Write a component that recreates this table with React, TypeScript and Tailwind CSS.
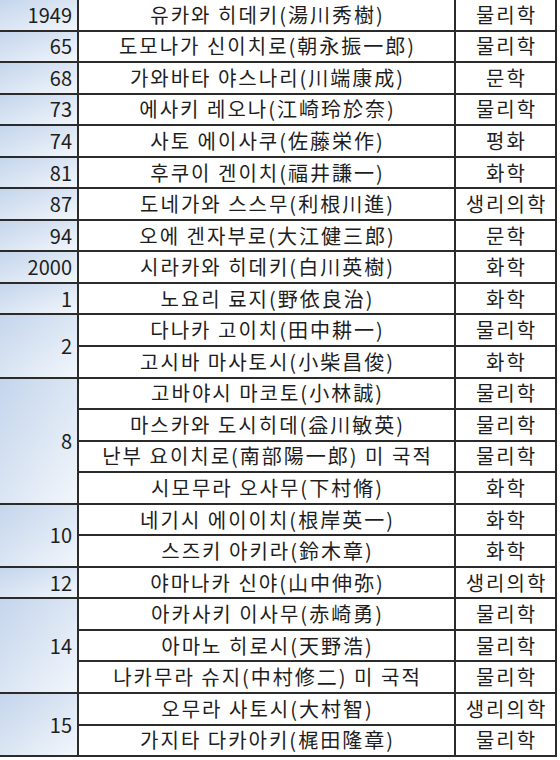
type Row = { name: string; field: string };
type Group = { year: string; rows: Row[] };

const groups: Group[] = [
  { year: "1949", rows: [{ name: "유카와 히데키(湯川秀樹)", field: "물리학" }] },
  { year: "65", rows: [{ name: "도모나가 신이치로(朝永振一郎)", field: "물리학" }] },
  { year: "68", rows: [{ name: "가와바타 야스나리(川端康成)", field: "문학" }] },
  { year: "73", rows: [{ name: "에사키 레오나(江崎玲於奈)", field: "물리학" }] },
  { year: "74", rows: [{ name: "사토 에이사쿠(佐藤栄作)", field: "평화" }] },
  { year: "81", rows: [{ name: "후쿠이 겐이치(福井謙一)", field: "화학" }] },
  { year: "87", rows: [{ name: "도네가와 스스무(利根川進)", field: "생리의학" }] },
  { year: "94", rows: [{ name: "오에 겐자부로(大江健三郎)", field: "문학" }] },
  { year: "2000", rows: [{ name: "시라카와 히데키(白川英樹)", field: "화학" }] },
  { year: "1", rows: [{ name: "노요리 료지(野依良治)", field: "화학" }] },
  {
    year: "2",
    rows: [
      { name: "다나카 고이치(田中耕一)", field: "물리학" },
      { name: "고시바 마사토시(小柴昌俊)", field: "화학" },
    ],
  },
  {
    year: "8",
    rows: [
      { name: "고바야시 마코토(小林誠)", field: "물리학" },
      { name: "마스카와 도시히데(益川敏英)", field: "물리학" },
      { name: "난부 요이치로(南部陽一郎) 미 국적", field: "물리학" },
      { name: "시모무라 오사무(下村脩)", field: "화학" },
    ],
  },
  {
    year: "10",
    rows: [
      { name: "네기시 에이이치(根岸英一)", field: "화학" },
      { name: "스즈키 아키라(鈴木章)", field: "화학" },
    ],
  },
  { year: "12", rows: [{ name: "야마나카 신야(山中伸弥)", field: "생리의학" }] },
  {
    year: "14",
    rows: [
      { name: "아카사키 이사무(赤崎勇)", field: "물리학" },
      { name: "아마노 히로시(天野浩)", field: "물리학" },
      { name: "나카무라 슈지(中村修二) 미 국적", field: "물리학" },
    ],
  },
  {
    year: "15",
    rows: [
      { name: "오무라 사토시(大村智)", field: "생리의학" },
      { name: "가지타 다카아키(梶田隆章)", field: "물리학" },
    ],
  },
];

const App = () => {
  return (
    <div
      className="min-h-[760px] bg-white text-[20px] leading-none text-[#1e1e1e]"
      style={{ fontFamily: '"Noto Sans CJK KR", "Noto Sans", sans-serif' }}
    >
      <div className="w-[557px]">
        {groups.map((g) => (
          <div key={g.year} className="flex">
            <div className="w-[79px] flex items-center justify-end pr-[5px] border-r-2 border-b-2 border-[#2b2b2b] bg-linear-to-br from-[#c4d5ec] to-[#f2f6fb]">
              {g.year}
            </div>
            <div className="flex flex-col">
              {g.rows.map((r) => (
                <div
                  key={r.name}
                  className="flex h-[31.55px] border-b-2 border-[#2b2b2b] tracking-[2px]"
                >
                  <div className="w-[377px] flex items-center justify-center pl-[2px] border-r-2 border-[#2b2b2b]">
                    {r.name}
                  </div>
                  <div className="w-[101px] flex items-center justify-center pl-[2px] border-r-2 border-[#2b2b2b]">
                    {r.field}
                  </div>
                </div>
              ))}
            </div>
          </div>
        ))}
      </div>
    </div>
  );
};

export default App;
